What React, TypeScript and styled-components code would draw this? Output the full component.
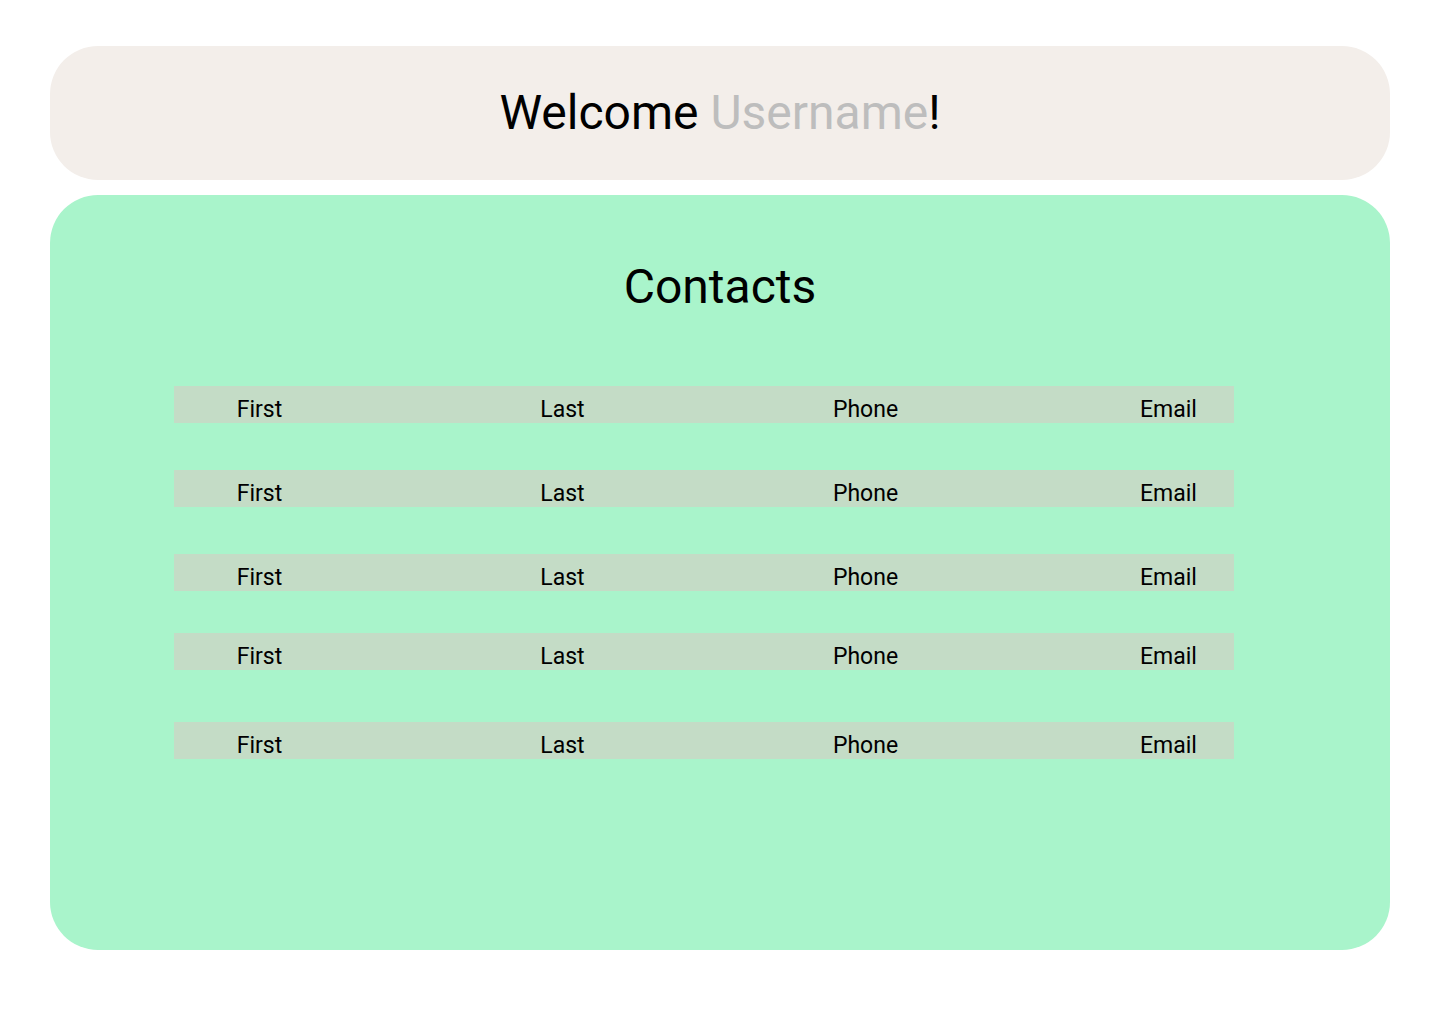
import React from "react";
import styled, { createGlobalStyle } from "styled-components";

const Global = createGlobalStyle`
  html, body { margin: 0; padding: 0; background: #ffffff; }
  body { font-family: Roboto, "Liberation Sans", Arial, sans-serif; color: #000; }
`;

const Page = styled.div`
  display: flex;
  flex-direction: column;
  gap: 15px;
  padding: 46px 50px;
`;

const Header = styled.header`
  height: 134px;
  border-radius: 48px;
  background: #f3eeea;
  display: flex;
  align-items: center;
  justify-content: center;
`;

const Welcome = styled.h1`
  margin: 0;
  font-size: 48px;
  font-weight: 400;
  line-height: 56px;
`;

const Muted = styled.span`
  color: #bdbdbd;
`;

const Card = styled.section`
  height: 755px;
  box-sizing: border-box;
  border-radius: 48px;
  background: #a9f4cb;
  padding: 64px 0 0 124px;
  display: flex;
  flex-direction: column;
`;

const Title = styled.h2`
  margin: 0 0 0 -124px;
  text-align: center;
  font-size: 48px;
  font-weight: 400;
  line-height: 56px;
`;

const List = styled.div`
  display: flex;
  flex-direction: column;
  width: 1060px;
  margin-top: 71px;
`;

const Row = styled.div<{ $top: number }>`
  margin-top: ${(p) => p.$top}px;
  height: 37px;
  box-sizing: border-box;
  background: #c4dcc6;
  padding: 9.5px 0 0 20px;
  display: grid;
  grid-template-columns: repeat(4, 303px);
  justify-content: center;
  font-size: 23px;
  line-height: 27px;
`;

const Cell = styled.span`
  text-align: center;
`;

const offsets = [0, 47, 47, 42, 52];

export default function App() {
  return (
    <>
      <Global />
      <Page>
        <Header>
          <Welcome>
            Welcome <Muted>Username</Muted>!
          </Welcome>
        </Header>
        <Card>
          <Title>Contacts</Title>
          <List>
            {offsets.map((top, i) => (
              <Row key={i} $top={top}>
                <Cell>First</Cell>
                <Cell>Last</Cell>
                <Cell>Phone</Cell>
                <Cell>Email</Cell>
              </Row>
            ))}
          </List>
        </Card>
      </Page>
    </>
  );
}
